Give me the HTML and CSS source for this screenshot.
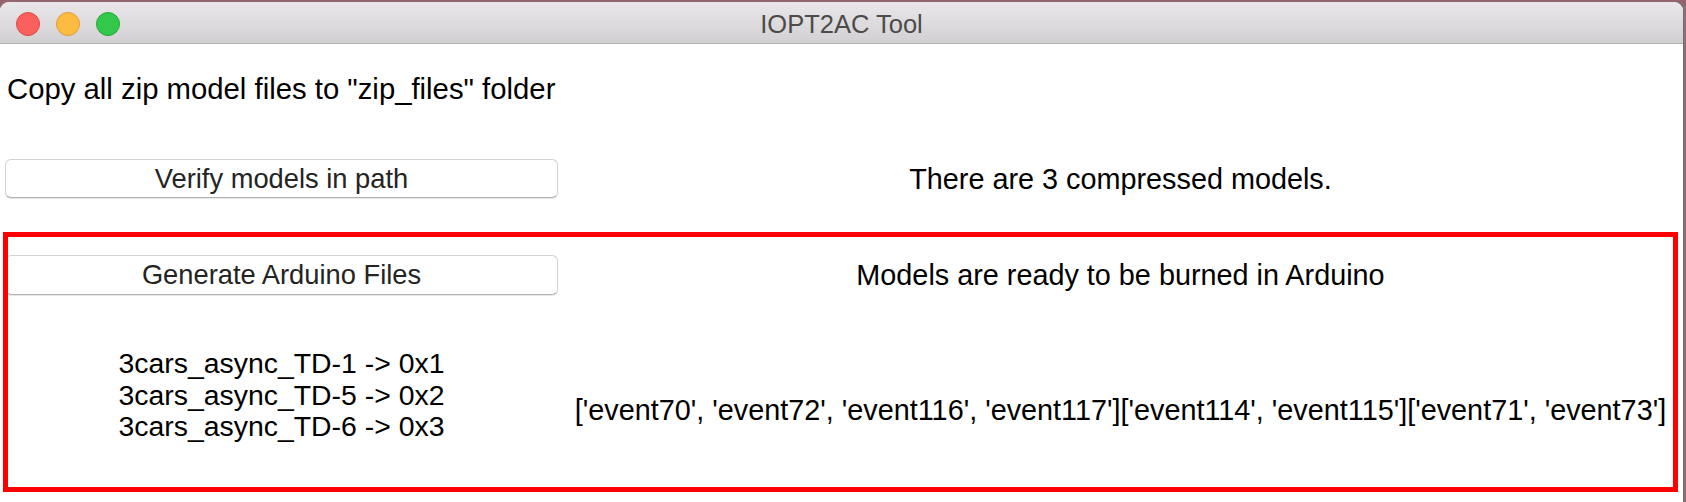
FILE: index.html
```html
<!DOCTYPE html>
<html lang="en">
<head>
  <meta charset="UTF-8">
  <title>IOPT2AC Tool</title>
  <link rel="stylesheet" href="styles.css">
</head>
<body>
  <div class="window">
    <div class="titlebar">
      <div class="lights">
        <span class="light close"></span>
        <span class="light min"></span>
        <span class="light max"></span>
      </div>
      <div class="title">IOPT2AC Tool</div>
      <div></div>
    </div>
    <div class="content">
      <p class="intro">Copy all zip model files to "zip_files" folder</p>
      <div class="row verify-row">
        <button class="btn">Verify models in path</button>
        <div class="status">There are 3 compressed models.</div>
      </div>
      <div class="ready">
        <div class="row">
          <button class="btn tall">Generate Arduino Files</button>
          <div class="status">Models are ready to be burned in Arduino</div>
        </div>
        <div class="row result-row">
          <div class="mapping">3cars_async_TD-1 -&gt; 0x1<br>3cars_async_TD-5 -&gt; 0x2<br>3cars_async_TD-6 -&gt; 0x3</div>
          <div class="events">['event70', 'event72', 'event116', 'event117']['event114', 'event115']['event71', 'event73']</div>
        </div>
        <span class="frame"></span>
      </div>
    </div>
  </div>
</body>
</html>
```

FILE: styles.css
```css
* {
  margin: 0;
  padding: 0;
  box-sizing: border-box;
}

body {
  background-color: #93666e;
  font-family: "Liberation Sans", Arial, sans-serif;
  overflow: hidden;
}

.window {
  margin-top: 2px;
  width: 1683px;
  height: 500px;
  background-color: #fff;
  border-radius: 9px 9px 0 0;
  overflow: hidden;
  box-shadow: 1px 0 0 #76686f, 2px 0 0 #8a7581;
}

.titlebar {
  display: grid;
  grid-template-columns: 1fr auto 1fr;
  align-items: center;
  height: 42px;
  background: linear-gradient(#e9e7e9, #d2d0d2);
  border-bottom: 1px solid #b3b1b3;
}

.lights {
  display: flex;
  gap: 16px;
  padding: 2px 0 0 16px;
}
.light {
  width: 24px;
  height: 24px;
  border-radius: 50%;
  border: 1px solid;
}
.light.close {
  background-color: #fc605c;
  border-color: #df4744;
}
.light.min {
  background-color: #fdbc40;
  border-color: #de9e33;
}
.light.max {
  background-color: #34c84a;
  border-color: #26a934;
}

.title {
  padding-top: 4px;
  font-size: 25.5px;
  color: #4b4b4b;
}

.content {
  font-size: 28.8px;
  color: #000;
}

.intro {
  margin-top: 28px;
  padding-left: 7px;
  font-size: 29.3px;
  line-height: 34px;
}

.row {
  display: grid;
  grid-template-columns: 553px 1fr;
  padding-left: 5px;
}
.verify-row {
  margin-top: 53px;
}

.btn {
  height: 39px;
  background-color: #fff;
  border: 1px solid #d2d2d2;
  border-bottom-color: #b2b2b2;
  border-radius: 6px;
  box-shadow: 0 1px 1px rgba(0, 0, 0, .1);
  font-family: "Liberation Sans", Arial, sans-serif;
  font-size: 27.3px;
  color: #242424;
}
.btn.tall {
  height: 40px;
}

.status {
  align-self: center;
  text-align: center;
  line-height: 34px;
}

.ready {
  position: relative;
  margin-top: 57px;
}

.result-row {
  margin-top: 53px;
}
.mapping {
  text-align: center;
  font-size: 28.4px;
  line-height: 31.5px;
}
.events {
  padding-top: 47px;
  text-align: center;
  line-height: 31.5px;
  white-space: nowrap;
}

.frame {
  position: absolute;
  top: -23px;
  left: 3px;
  right: 5px;
  height: 260px;
  border: 5px solid #ff0000;
  pointer-events: none;
}
```
